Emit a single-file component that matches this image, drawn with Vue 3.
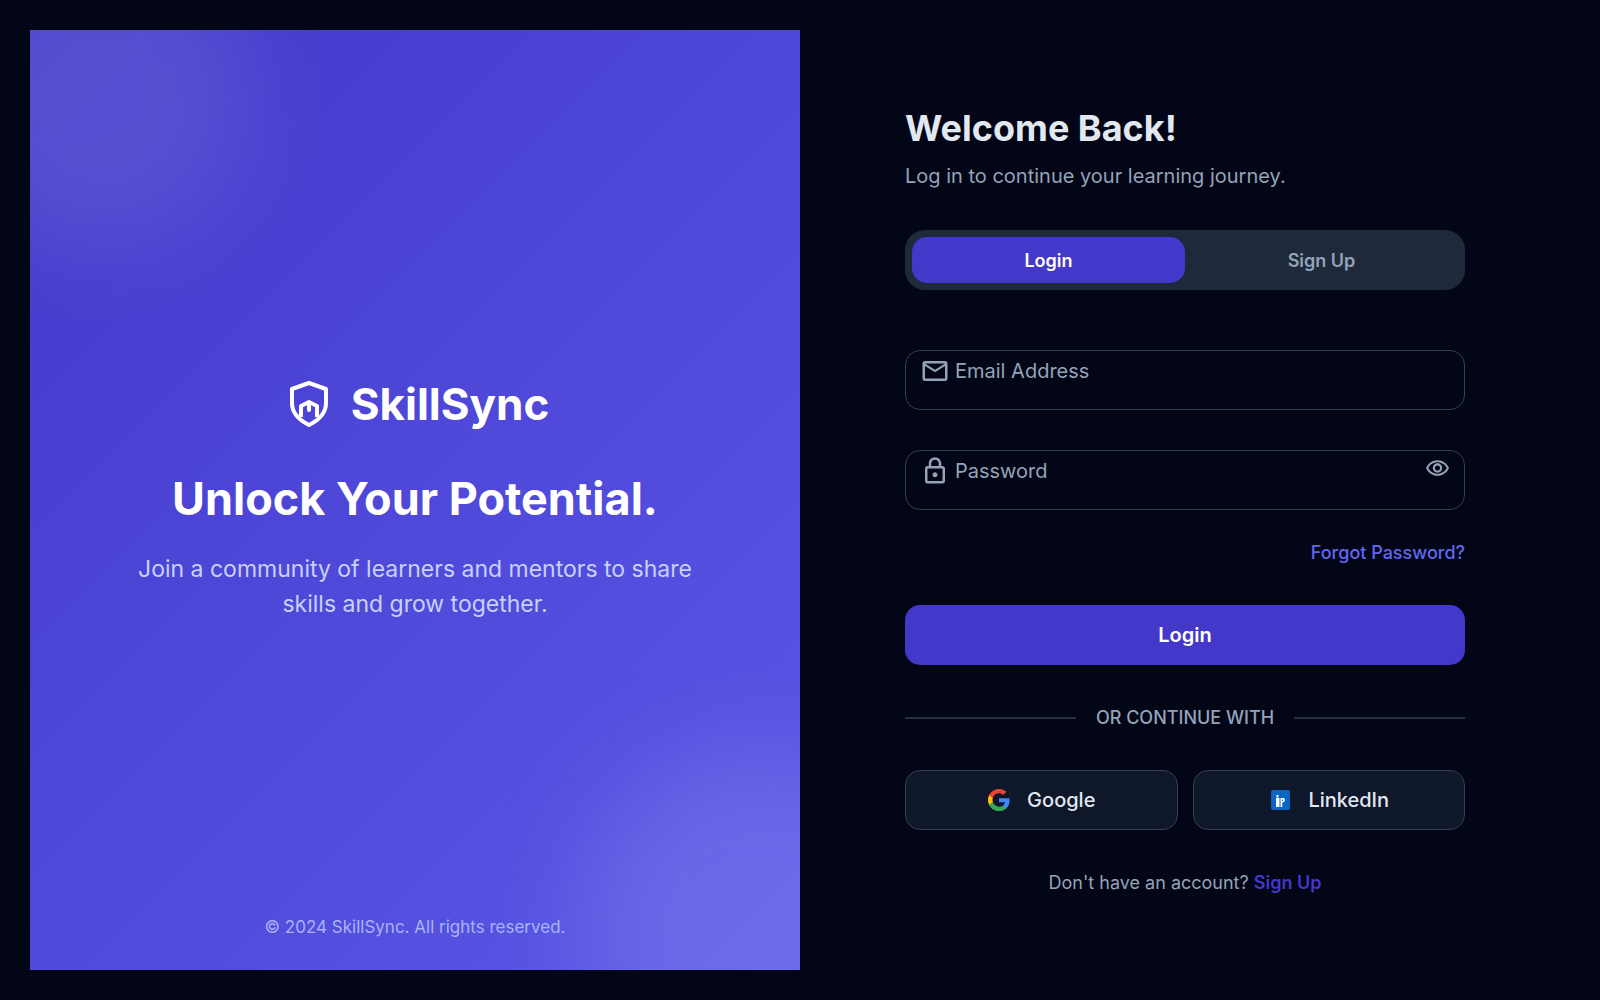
<script setup>
import { ref } from 'vue'

const mode = ref('login')
const email = ref('')
const password = ref('')
const showPassword = ref(false)
</script>

<template>
  <div class="page">
    <section class="brand">
      <div class="glow glow-top"></div>
      <div class="glow glow-bottom"></div>
      <div class="brand-main">
        <div class="logo">
          <svg class="logo-mark" viewBox="0 0 38 46" fill="none" stroke="#fff" stroke-width="4" stroke-linejoin="round" aria-hidden="true">
            <path d="M19 2 36 8v14c0 10-7 17-17 22C9 39 2 32 2 22V8z" />
            <path d="M11 36V25l8-4 8 4v11" />
            <path d="M19 22v7" stroke-linecap="round" />
          </svg>
          <span class="logo-name">SkillSync</span>
        </div>
        <h2 class="tagline">Unlock Your Potential.</h2>
        <p class="pitch">Join a community of learners and mentors to share skills and grow together.</p>
      </div>
      <p class="copyright">© 2024 SkillSync. All rights reserved.</p>
    </section>

    <main class="panel">
      <div class="auth">
        <h1 class="title">Welcome Back!</h1>
        <p class="subtitle">Log in to continue your learning journey.</p>

        <div class="tabs">
          <button type="button" class="tab" :class="{ active: mode === 'login' }" @click="mode = 'login'">Login</button>
          <button type="button" class="tab" :class="{ active: mode === 'signup' }" @click="mode = 'signup'">Sign Up</button>
        </div>

        <form @submit.prevent>
          <div class="field">
            <label for="email" aria-label="Email Address">
              <svg class="field-icon" viewBox="0 0 24 24" fill="currentColor" aria-hidden="true">
                <path d="M22 6c0-1.100-.9-2-2-2H4c-1.100 0-2 .9-2 2v12c0 1.100.9 2 2 2h16c1.100 0 2-.9 2-2V6zm-2 0-8 5-8-5h16zm0 12H4V8l8 5 8-5v10z" />
              </svg>
            </label>
            <input id="email" v-model="email" type="email" placeholder="Email Address" />
          </div>
          <div class="field">
            <label for="password" aria-label="Password">
              <svg class="field-icon" viewBox="0 0 24 24" fill="currentColor" aria-hidden="true">
                <path d="M18 8h-1V6c0-2.760-2.240-5-5-5S7 3.240 7 6v2H6c-1.100 0-2 .9-2 2v10c0 1.100.9 2 2 2h12c1.100 0 2-.9 2-2V10c0-1.100-.9-2-2-2zM9 6c0-1.660 1.340-3 3-3s3 1.340 3 3v2H9V6zm9 14H6V10h12v10zm-6-3c1.100 0 2-.9 2-2s-.9-2-2-2-2 .9-2 2 .9 2 2 2z" />
              </svg>
            </label>
            <input id="password" v-model="password" :type="showPassword ? 'text' : 'password'" placeholder="Password" />
            <button type="button" class="reveal" aria-label="Show password" @click="showPassword = !showPassword">
              <svg viewBox="0 0 24 24" fill="currentColor" aria-hidden="true">
                <path d="M12 6c3.790 0 7.170 2.130 8.820 5.500C19.170 14.870 15.790 17 12 17s-7.170-2.130-8.820-5.500C4.830 8.130 8.210 6 12 6m0-2C7 4 2.730 7.110 1 11.500 2.730 15.890 7 19 12 19s9.270-3.110 11-7.500C21.270 7.110 17 4 12 4zm0 5c1.380 0 2.500 1.120 2.500 2.500S13.380 14 12 14s-2.500-1.120-2.500-2.500S10.620 9 12 9m0-2c-2.480 0-4.500 2.020-4.500 4.500S9.520 16 12 16s4.500-2.020 4.500-4.500S14.480 7 12 7z" />
              </svg>
            </button>
          </div>
          <a href="#" class="forgot">Forgot Password?</a>
          <button type="submit" class="submit">Login</button>
        </form>

        <div class="divider"><span>OR CONTINUE WITH</span></div>

        <div class="socials">
          <button type="button" class="social">
            <svg width="24" height="24" viewBox="-1 -1 26 26" aria-hidden="true">
              <path fill="#4285f4" d="M23.500 12.300c0-.8-.1-1.600-.2-2.300H12v4.500h6.500c-.3 1.500-1.100 2.700-2.400 3.600v3h3.900c2.200-2.100 3.500-5.100 3.500-8.800z" />
              <path fill="#34a853" d="M12 24c3.200 0 6-1.100 8-2.900l-3.900-3c-1.100.7-2.500 1.200-4.100 1.200-3.100 0-5.800-2.100-6.700-5H1.300v3.100C3.300 21.300 7.300 24 12 24z" />
              <path fill="#fbbc05" d="M5.300 14.300c-.5-1.500-.5-3.100 0-4.600V6.600H1.300c-1.700 3.400-1.700 7.400 0 10.800z" />
              <path fill="#ea4335" d="M12 4.700c1.800 0 3.300.6 4.600 1.800L20 3.100C17.900 1.200 15.200 0 12 0 7.300 0 3.300 2.700 1.300 6.600l4 3.100c.9-2.900 3.600-5 6.700-5z" />
            </svg>
            Google
          </button>
          <button type="button" class="social">
            <svg width="24" height="24" viewBox="-3 -2 24 24" aria-hidden="true">
              <rect width="19" height="20" rx="2" fill="#0a66c2" />
              <path fill="#fff" d="M5 8h3.500v9H5zM5.500 5h2v2.500h-2zM9.500 8H13c1.500 2 1.200 4-1.700 4.500V17H9.500z" />
              <path fill="#0a66c2" d="M11 9.500h1v1.500h-1z" />
            </svg>
            LinkedIn
          </button>
        </div>

        <p class="signup">Don't have an account? <a href="#">Sign Up</a></p>
      </div>
    </main>
  </div>
</template>

<style>
body {
  margin: 0;
  background: #020617;
}
</style>

<style scoped>
.page {
  display: flex;
  box-sizing: border-box;
  min-height: 100vh;
  padding: 30px;
  background: #020617;
  color: #e2e8f0;
  font-family: Inter, "Liberation Sans", sans-serif;
  font-size: 20px;
  line-height: 30px;
}

h1,
h2,
p {
  margin: 0;
}

button,
input {
  padding: 0;
  border: 0;
  background: none;
  color: inherit;
  font: inherit;
}

button {
  cursor: pointer;
}

a {
  text-decoration: none;
}

svg {
  display: block;
  flex: none;
}

.brand {
  position: relative;
  display: flex;
  flex: 1;
  flex-direction: column;
  align-items: center;
  justify-content: center;
  overflow: hidden;
  background: linear-gradient(135deg, #4338ca, #5b58e7);
  color: #fff;
  text-align: center;
}

.glow {
  position: absolute;
  border-radius: 50%;
  filter: blur(50px);
}

.glow-top {
  top: -100px;
  left: -100px;
  width: 320px;
  height: 320px;
  background: rgba(255, 255, 255, 0.1);
}

.glow-bottom {
  right: -120px;
  bottom: -120px;
  width: 340px;
  height: 340px;
  background: rgba(199, 210, 254, 0.16);
}

.brand-main {
  position: relative;
  display: flex;
  flex-direction: column;
  align-items: center;
  max-width: 560px;
}

.logo {
  display: flex;
  align-items: center;
  gap: 14px;
  margin-bottom: 42px;
}

.logo-mark {
  width: 56px;
  height: 46px;
}

.logo-name {
  font-size: 44px;
  font-weight: 700;
  line-height: 50px;
}

.tagline {
  margin-bottom: 25px;
  font-size: 45px;
  font-weight: 700;
  line-height: 56px;
}

.pitch {
  color: #c7d2fe;
  font-size: 23px;
  line-height: 35px;
}

.copyright {
  position: absolute;
  bottom: 30px;
  color: #a5b4fc;
  font-size: 17px;
  line-height: 25px;
}

.panel {
  display: flex;
  flex: 1;
  align-items: center;
  justify-content: center;
}

.auth {
  width: 100%;
  max-width: 560px;
}

.title {
  margin-bottom: 10px;
  font-size: 36px;
  font-weight: 700;
  line-height: 46px;
}

.subtitle {
  margin-bottom: 39px;
  color: #94a3b8;
}

.tabs {
  display: flex;
  box-sizing: border-box;
  height: 60px;
  margin-bottom: 60px;
  padding: 7px;
  border-radius: 20px;
  background: #1e293b;
}

.tab {
  flex: 1;
  padding-top: 2px;
  border-radius: 15px;
  color: #94a3b8;
  font-size: 18px;
  font-weight: 600;
}

.tab.active {
  background: #4338ca;
  color: #fff;
}

.field {
  display: flex;
  align-items: flex-start;
  box-sizing: border-box;
  height: 60px;
  margin-bottom: 40px;
  padding: 5px 14px;
  border: 1px solid #334155;
  border-radius: 15px;
  color: #94a3b8;
}

.field-icon {
  width: 30px;
  height: 30px;
}

.field input {
  flex: 1;
  min-width: 0;
  height: 30px;
  margin-left: 5px;
  outline: none;
  color: #e2e8f0;
}

.field input::placeholder {
  color: #94a3b8;
  opacity: 1;
}

.reveal svg {
  width: 25px;
  height: 25px;
}

.forgot {
  display: block;
  margin-top: -10px;
  margin-bottom: 40px;
  color: #6366f1;
  font-size: 18px;
  font-weight: 500;
  line-height: 25px;
  text-align: right;
}

.submit {
  width: 100%;
  height: 60px;
  border-radius: 15px;
  background: #4338ca;
  color: #fff;
  font-weight: 600;
}

.divider {
  display: flex;
  align-items: center;
  gap: 20px;
  margin: 40px 0;
  color: #94a3b8;
  font-size: 18px;
  font-weight: 500;
  line-height: 25px;
}

.divider::before,
.divider::after {
  flex: 1;
  height: 2px;
  background: #253143;
  content: "";
}

.socials {
  display: flex;
  gap: 15px;
}

.social {
  display: flex;
  flex: 1;
  align-items: center;
  justify-content: center;
  gap: 16px;
  box-sizing: border-box;
  height: 60px;
  border: 1px solid #334155;
  border-radius: 15px;
  background: #0f172a;
  font-weight: 500;
}

.signup {
  margin-top: 40px;
  color: #94a3b8;
  font-size: 18px;
  line-height: 25px;
  text-align: center;
}

.signup a {
  color: #4338ca;
  font-weight: 600;
}
</style>
